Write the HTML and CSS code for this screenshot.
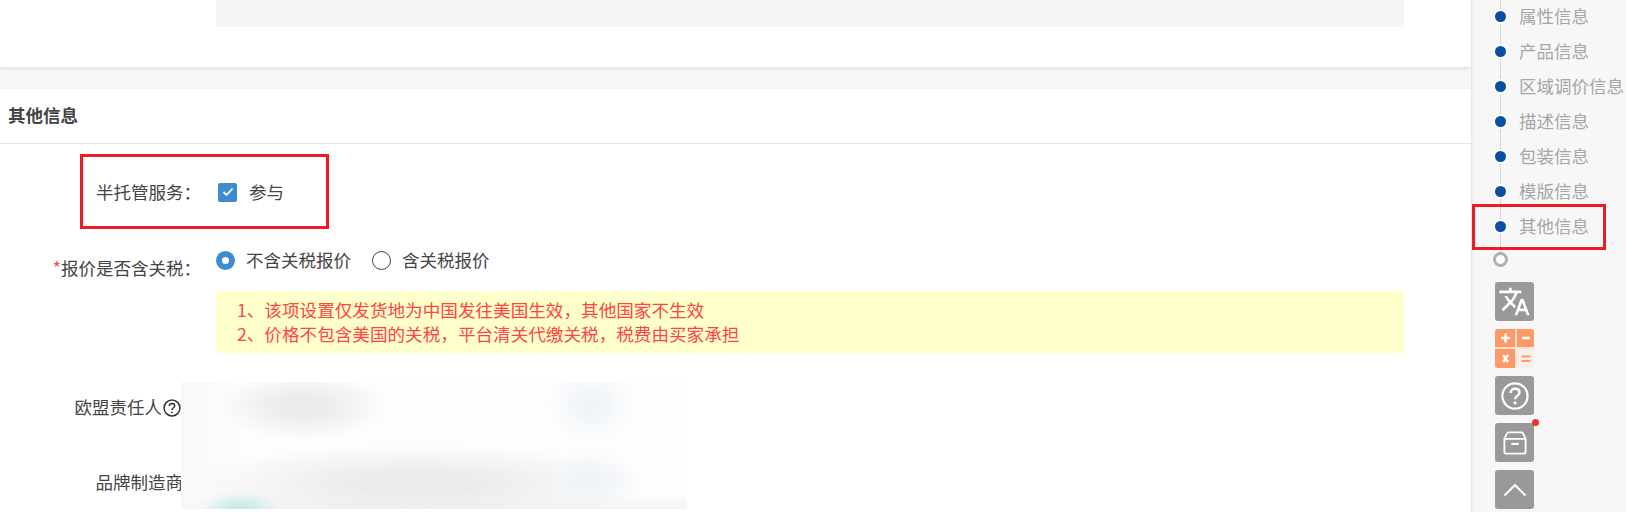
FILE: index.html
```html
<!DOCTYPE html>
<html lang="zh-CN">
<head>
    <meta charset="UTF-8">
    <title>其他信息</title>
    <link rel="stylesheet" href="styles.css">
</head>
<body>
    <div class="page">
        <div class="main">
            <div class="card card-top">
                <div class="grey-bar"></div>
            </div>

            <div class="card card-other">
                <div class="card-title">其他信息</div>

                <div class="form-row row-trust">
                    <div class="form-label">半托管服务：</div>
                    <div class="form-control">
                        <span class="checkbox">
                            <svg width="12" height="10" viewBox="0 0 12 10"><path d="M1.5 5l3 3 6-6.5" fill="none" stroke="#fff" stroke-width="1.8"/></svg>
                        </span>
                        <span>参与</span>
                    </div>
                </div>

                <div class="form-row row-tax">
                    <div class="form-label"><span class="required">*</span>报价是否含关税：</div>
                    <div class="form-control control-tax">
                        <span class="radio radio-on"></span>
                        <span class="radio-text">不含关税报价</span>
                        <span class="radio"></span>
                        <span>含关税报价</span>
                    </div>
                </div>

                <div class="notice">
                    <p>1、该项设置仅发货地为中国发往美国生效，其他国家不生效</p>
                    <p>2、价格不包含美国的关税，平台清关代缴关税，税费由买家承担</p>
                </div>

                <div class="form-row row-eu">
                    <div class="form-label label-plain">欧盟责任人
                        <svg class="help-icon" width="18" height="18" viewBox="0 0 17 17">
                            <circle cx="8.5" cy="8.5" r="7.5" fill="none" stroke="#333" stroke-width="1.4"/>
                            <path d="M5.9 6.6c0-1.5 1.1-2.4 2.6-2.4s2.6.9 2.6 2.2c0 1.9-2.6 1.9-2.6 3.9" fill="none" stroke="#333" stroke-width="1.4"/>
                            <circle cx="8.5" cy="12.6" r=".9" fill="#333"/>
                        </svg>
                    </div>
                </div>

                <div class="form-row row-brand">
                    <div class="form-label label-plain label-brand">品牌制造商</div>
                </div>

                <div class="blurred"></div>
                <div class="red-box box-trust"></div>
            </div>
        </div>

        <div class="side">
            <div class="timeline">
                <div class="step">属性信息</div>
                <div class="step">产品信息</div>
                <div class="step">区域调价信息</div>
                <div class="step">描述信息</div>
                <div class="step">包装信息</div>
                <div class="step">模版信息</div>
                <div class="step">其他信息</div>
                <div class="step step-end"></div>
            </div>

            <div class="tools">
                <div class="tool">
                    <svg width="33" height="33" viewBox="0 0 24 24"><path fill="#fff" d="M12.87 15.07l-2.54-2.51.03-.03c1.74-1.94 2.98-4.17 3.71-6.53H17V4h-7V2H8v2H1v1.99h11.17C11.5 7.92 10.44 9.75 9 11.35 8.07 10.32 7.3 9.19 6.69 8h-2c.73 1.63 1.73 3.17 2.98 4.56l-5.09 5.02L4 19l5-5 3.11 3.11.76-2.04zM18.5 10h-2L12 22h2l1.12-3h4.75L21 22h2l-4.5-12zm-2.62 7l1.62-4.33L19.12 17h-3.24z"/></svg>
                </div>
                <div class="tool tool-calc">
                    <svg width="39" height="39" viewBox="0 0 39 39">
                        <rect x="0" y="0" width="20" height="18" fill="#ff9a66"/>
                        <rect x="22" y="0" width="17" height="18" fill="#ff9a66"/>
                        <rect x="0" y="20" width="20" height="19" fill="#ff9a66"/>
                        <rect x="22" y="20" width="17" height="19" fill="#f9eee8"/>
                        <path d="M6 9h9M10.5 4.5v9M27 9h8" stroke="#fff" stroke-width="2.4" fill="none"/>
                        <path d="M8 26l5 7M13 26l-5 7" stroke="#fff" stroke-width="2.4" fill="none"/>
                        <path d="M26.5 27.5h9M26.5 32h9" stroke="#ff9a66" stroke-width="2" fill="none"/>
                    </svg>
                </div>
                <div class="tool">
                    <svg width="30" height="30" viewBox="0 0 30 30">
                        <circle cx="15" cy="15" r="12.6" fill="none" stroke="#fff" stroke-width="2.2"/>
                        <path d="M10.6 12c0-2.6 1.9-4.2 4.5-4.2s4.4 1.5 4.4 3.8c0 3.2-4.4 3.2-4.4 6.6" fill="none" stroke="#fff" stroke-width="2.4"/>
                        <circle cx="15.1" cy="21.8" r="1.6" fill="#fff"/>
                    </svg>
                </div>
                <div class="tool">
                    <svg width="24" height="24" viewBox="0 0 26 26">
                        <path d="M1.5 8.5l3-6.2a1.6 1.6 0 0 1 1.4-.8h14.2a1.6 1.6 0 0 1 1.4.8l3 6.2v14a2 2 0 0 1-2 2h-19a2 2 0 0 1-2-2zM1.5 8.5h23" fill="none" stroke="#fff" stroke-width="2"/>
                        <path d="M9 14h8" stroke="#fff" stroke-width="2.2"/>
                    </svg>
                    <span class="red-dot"></span>
                </div>
                <div class="tool">
                    <svg width="24" height="14" viewBox="0 0 24 14"><path d="M1.5 12.5L12 2l10.5 10.5" fill="none" stroke="#fff" stroke-width="2.2"/></svg>
                </div>
            </div>

            <div class="red-box box-side"></div>
        </div>
    </div>
</body>
</html>
```

FILE: styles.css
```css
*, *::before, *::after {
    margin: 0;
    padding: 0;
    box-sizing: border-box;
}

html, body {
    height: 100%;
    overflow: hidden;
}

body {
    font-family: "Noto Sans CJK SC", "Liberation Sans", sans-serif;
    font-size: 17.5px;
    color: #444;
    background: #f7f7f7;
}

.page {
    display: flex;
    height: 512px;
    overflow: hidden;
}

.main {
    width: 1471px;
    flex-shrink: 0;
}

.card {
    background: #fff;
    box-shadow: 0 1px 4px rgba(0, 0, 0, 0.12);
}

.card-top {
    height: 67px;
    padding-left: 216px;
}

.grey-bar {
    width: 1188px;
    height: 27px;
    background: #f5f5f3;
}

.card-other {
    position: relative;
    height: 440px;
    margin-top: 22px;
}

.card-title {
    height: 55px;
    padding-left: 8px;
    line-height: 52px;
    font-weight: 700;
    border-bottom: 1px solid #e5e5e5;
}

.form-row {
    display: flex;
    align-items: flex-start;
}

.form-label {
    width: 201px;
    flex-shrink: 0;
    text-align: right;
    line-height: 24px;
}

.label-plain {
    width: 181px;
    white-space: nowrap;
}

.label-brand {
    width: 183px;
}

.form-control {
    display: flex;
    align-items: center;
    margin-left: 15px;
    line-height: 24px;
}

.row-trust {
    padding-top: 36px;
}

.checkbox {
    display: flex;
    align-items: center;
    justify-content: center;
    width: 19px;
    height: 19px;
    margin: 0 12px 0 2px;
    background: #3f8bd0;
    border-radius: 2px;
}

.row-tax {
    margin-top: 44px;
}

.row-tax .form-label {
    padding-top: 8px;
}

.control-tax {
    height: 24px;
}

.required {
    color: #f44;
}

.radio {
    width: 19px;
    height: 19px;
    margin-right: 11px;
    border: 1px solid #444;
    border-radius: 50%;
}

.radio-on {
    border: 6px solid #3f8bd0;
    background: #fff;
}

.radio-text {
    margin-right: 21px;
}

.notice {
    width: 1188px;
    height: 62px;
    margin: 11px 0 0 216px;
    padding: 7px 21px;
    background: #ffffcc;
    color: #f44;
    font-size: 17.6px;
    line-height: 24px;
}

.row-eu {
    margin-top: 42px;
}

.row-brand {
    margin-top: 51px;
}

.help-icon {
    vertical-align: -3px;
    margin-left: -3px;
}

.blurred {
    position: absolute;
    left: 181px;
    top: 293px;
    width: 506px;
    height: 127px;
    background:
        radial-gradient(ellipse 40px 20px at 59px 128px, rgba(188, 230, 230, 0.95), rgba(188, 230, 230, 0) 100%),
        radial-gradient(ellipse 45px 36px at 410px 23px, #f0f4f8 20%, rgba(240, 244, 248, 0) 100%),
        radial-gradient(ellipse 45px 36px at 410px 100px, #f0f4f8 20%, rgba(240, 244, 248, 0) 100%),
        radial-gradient(ellipse 85px 34px at 122px 24px, #ebebeb 25%, rgba(235, 235, 235, 0) 100%),
        radial-gradient(ellipse 230px 40px at 235px 102px, #ebebeb 25%, rgba(235, 235, 235, 0) 100%),
        linear-gradient(to right, #f8f8f8, rgba(248, 248, 248, 0) 60px),
        linear-gradient(to bottom, #fdfdfd 88%, #f3f3f3 100%);
}

.red-box {
    position: absolute;
    border: 3px solid #ed1c24;
}

.box-trust {
    left: 80px;
    top: 65px;
    width: 249px;
    height: 75px;
}

.side {
    position: relative;
    flex: 1;
    height: 512px;
    background: #f7f7f7;
    box-shadow: inset 3px 0 3px -2px rgba(0, 0, 0, 0.1);
}

.timeline {
    margin-top: -2px;
    color: #a6a6a6;
}

.step {
    position: relative;
    height: 35px;
    padding-left: 48px;
    line-height: 35px;
    white-space: nowrap;
}

/* line behind the dots */
.step::before {
    content: "";
    position: absolute;
    left: 29px;
    top: 0;
    bottom: 0;
    width: 1px;
    background: #d5d5d5;
}

.step::after {
    content: "";
    position: absolute;
    left: 24px;
    top: 13px;
    width: 11px;
    height: 11px;
    background: #0a4fa3;
    border-radius: 50%;
    box-shadow: 0 0 0 2px #fff;
}

.step-end {
    height: 31px;
}

.step-end::before {
    bottom: 20px;
}

.step-end::after {
    left: 22px;
    top: 9px;
    width: 15px;
    height: 15px;
    background: #fff;
    border: 3px solid #b0b0b0;
    box-shadow: none;
}

.tools {
    display: flex;
    flex-direction: column;
    gap: 8px;
    margin: 8px 0 0 24px;
}

.tool {
    position: relative;
    display: flex;
    align-items: center;
    justify-content: center;
    width: 39px;
    height: 39px;
    background: #999;
    border-radius: 3px;
}

.tool-calc {
    background: #f8e4d8;
    overflow: hidden;
}

.red-dot {
    position: absolute;
    right: -5px;
    top: -4px;
    width: 7px;
    height: 7px;
    background: #ee3333;
    border-radius: 50%;
}

.box-side {
    left: 1px;
    top: 204px;
    width: 134px;
    height: 46px;
}
```
